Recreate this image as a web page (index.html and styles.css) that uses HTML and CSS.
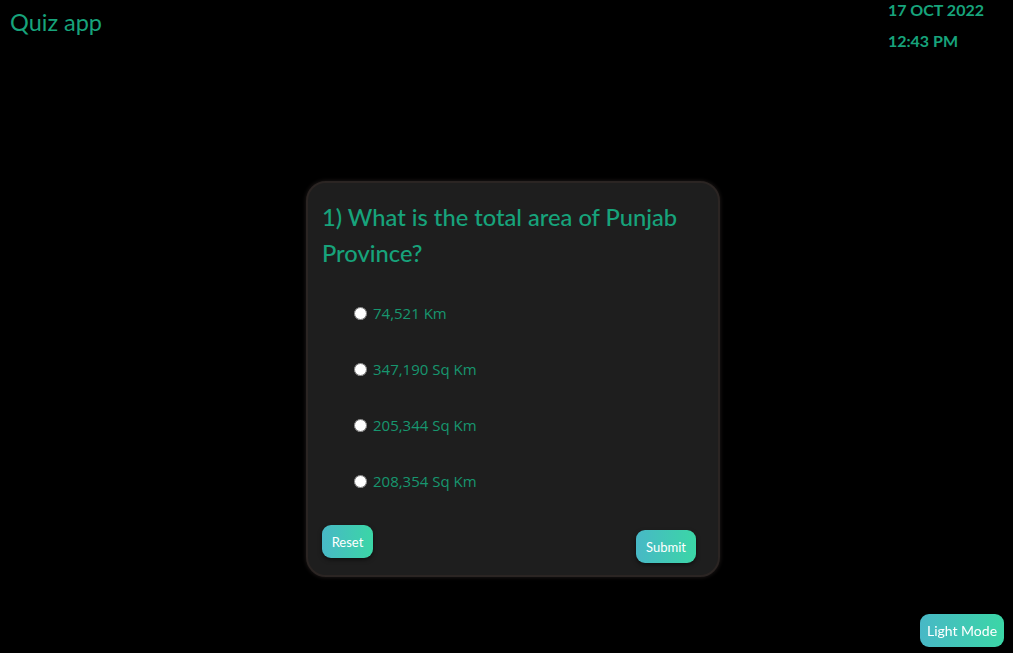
FILE: index.html
```html
<!DOCTYPE html>
<html>
<head>
<meta charset="utf-8">
<link rel="stylesheet" href="styles.css">
</head>
<body>
<header class="top">
  <h1 class="brand">Quiz app</h1>
  <div class="clock">
    <div class="date">17 OCT 2022</div>
    <div class="time">12:43 PM</div>
  </div>
</header>
<main class="stage">
  <section class="card">
    <h2 class="question">1) What is the total area of Punjab Province?</h2>
    <ul class="options">
      <li><label><input type="radio" name="a"><span>74,521 Km</span></label></li>
      <li><label><input type="radio" name="a"><span>347,190 Sq Km</span></label></li>
      <li><label><input type="radio" name="a"><span>205,344 Sq Km</span></label></li>
      <li><label><input type="radio" name="a"><span>208,354 Sq Km</span></label></li>
    </ul>
    <div class="actions">
      <button class="btn reset">Reset</button>
      <button class="btn submit">Submit</button>
    </div>
  </section>
</main>
<button class="btn mode">Light Mode</button>
</body>
</html>
```

FILE: styles.css
```css
html, body { margin: 0; padding: 0; background: #000; height: 100%; }
body { font-family: Lato, "Open Sans", sans-serif; color: #17a37b; overflow: hidden; }
.top { display: flex; justify-content: space-between; align-items: flex-start; }
.brand { margin: 8px 0 0 10px; font-size: 23.5px; font-weight: 400; line-height: 28px; }
.clock { margin: 0 29px 0 0; font-size: 16px; font-weight: 700; }
.date { line-height: 20px; margin-top: 0; }
.time { line-height: 20px; margin-top: 11px; }
.stage { display: flex; justify-content: center; padding-top: 130px; padding-left: 13px; }
.card { width: 382px; background: #1e1e1e; border: 2px solid #2b2523; border-radius: 20px; padding: 16px 14px 12px 14px; box-shadow: 0 0 4px rgba(60,50,48,0.6); }
.question { margin: 0; font-size: 23.7px; font-weight: 500; line-height: 36px; }
.options { list-style: none; margin: 32px 0 0 0; padding: 0 0 0 32px; }
.options li { height: 56px; }
.options label { display: flex; align-items: center; gap: 6px; font-family: "Open Sans", sans-serif; font-size: 15px; color: #17966f; }
.options input { margin: 0; width: 13px; height: 13px; accent-color: #fff; }
.actions { display: flex; justify-content: space-between; align-items: flex-start; margin-top: -2px; }
.btn { border: none; border-radius: 9px; color: #fff; font-family: Lato, sans-serif; font-size: 13px; background: linear-gradient(90deg, #48b8c6, #3bd6a6); box-shadow: 0 2px 4px rgba(0,0,0,0.5); cursor: pointer; }
.reset { width: 51px; height: 33px; }
.submit { width: 60px; height: 33px; margin-top: 5px; margin-right: 8px; }
.mode { position: fixed; right: 9px; bottom: 6px; width: 84px; height: 33px; font-size: 14px; }
```
